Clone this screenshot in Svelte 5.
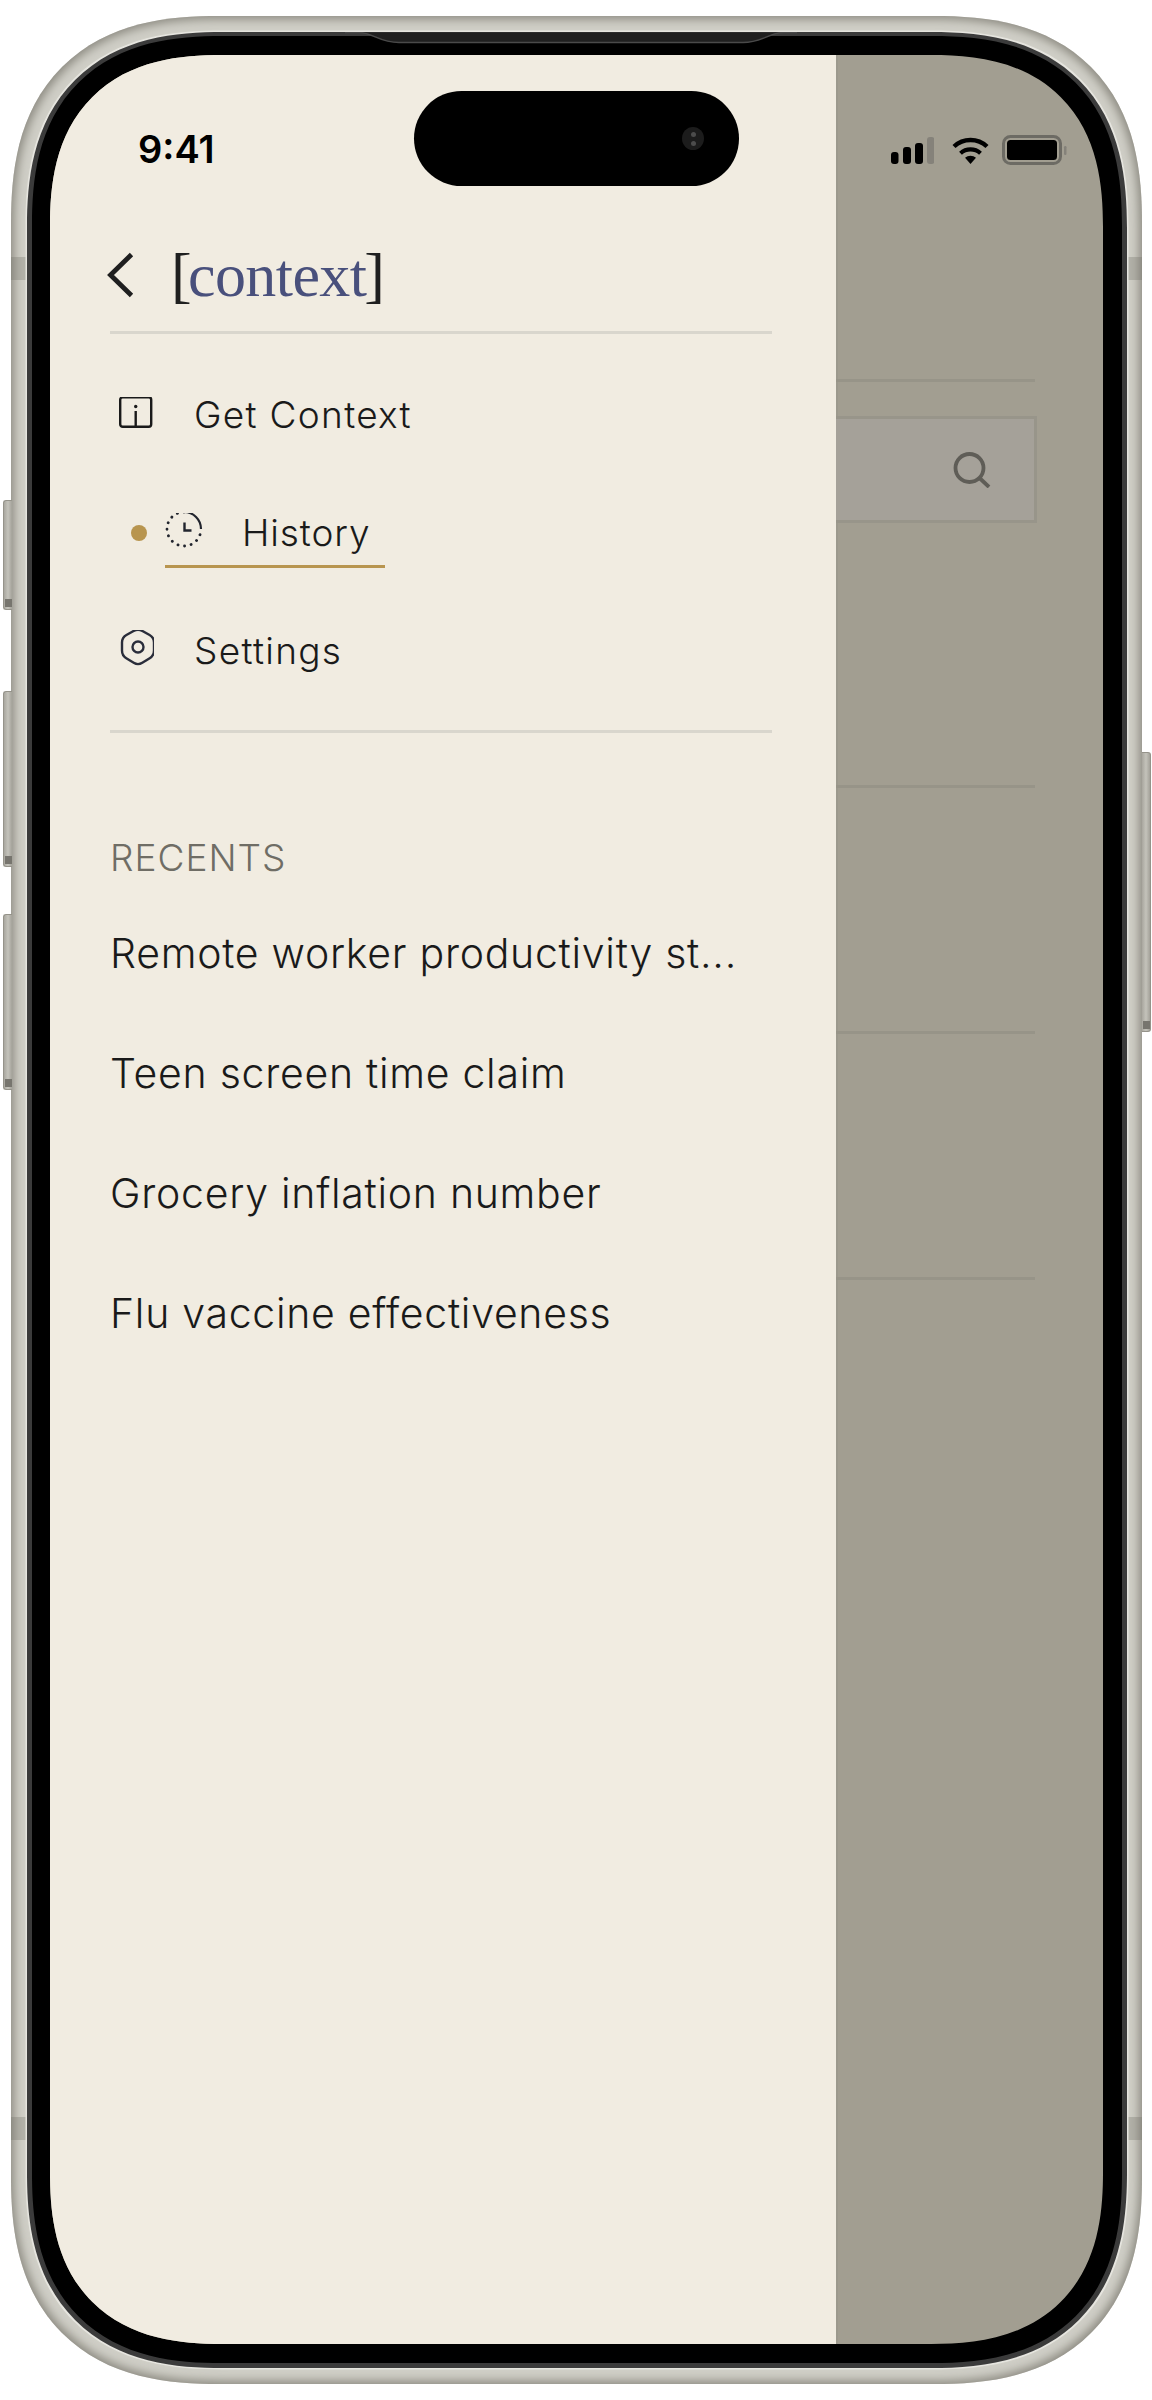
<script>
	const recents = [
		'Remote worker productivity st...',
		'Teen screen time claim',
		'Grocery inflation number',
		'Flu vaccine effectiveness'
	];
</script>

<div class="page">
	<div class="phone">
		<span class="btn left b1"></span>
		<span class="btn left b2"></span>
		<span class="btn left b3"></span>
		<span class="btn right"></span>
		<span class="band tl"></span>
		<span class="band tr"></span>
		<span class="band bl"></span>
		<span class="band br"></span>

		<div class="bezel">
			<svg class="speaker" width="452" height="12" viewBox="0 0 452 12">
				<path d="M0 .5h14c14 0 20 10 40 10h344c20 0 26-10 40-10h14" fill="#1f1f1f" stroke="#4a4a4a" stroke-width="1.5" />
			</svg>
			<div class="black">
				<div class="screen">
					<div class="statusbar">
						<span class="time">9:41</span>
						<div class="status-icons">
							<svg width="43" height="27" viewBox="0 0 43 27">
								<rect x="0" y="15" width="7.5" height="12" rx="3" fill="#000" />
								<rect x="12" y="10" width="8" height="17" rx="3" fill="#000" />
								<rect x="24" y="6" width="8" height="21" rx="3" fill="#000" />
								<rect x="36" y="0" width="7.5" height="27" rx="3" fill="#85827a" />
							</svg>
							<svg class="wifi" width="37" height="27" viewBox="0 0 37 27">
								<path d="M2 9.5a24 24 0 0 1 33 0" fill="none" stroke="#000" stroke-width="4.4" />
								<path d="M8.5 16.2a15 15 0 0 1 20 0" fill="none" stroke="#000" stroke-width="4.2" />
								<path d="M13 20.8a8.5 8.5 0 0 1 11 0L18.500 27z" fill="#000" />
							</svg>
							<svg class="battery" width="65" height="30" viewBox="0 0 65 30">
								<rect x="1.500" y="1.500" width="57" height="27" rx="7" fill="none" stroke="#6d6b64" stroke-width="3" />
								<rect x="5" y="5" width="50" height="20" rx="3.500" fill="#000" />
								<rect x="62" y="11" width="2.500" height="9" rx="1.200" fill="#85827a" />
							</svg>
						</div>
					</div>
					<div class="island"><span class="camera"><i></i><i></i></span></div>

					<aside class="panel">
						<header class="head">
							<svg class="back" width="28" height="46" viewBox="0 0 28 46">
								<path d="M24.500 2.500 3.500 23l21 20.500" fill="none" stroke="#1f1f1f" stroke-width="4.800" />
							</svg>
							<h1>[<span>context</span>]</h1>
						</header>

						<nav class="nav">
							<a class="item">
								<svg width="36" height="34" viewBox="0 2 36 34">
									<rect x="2.200" y="2.200" width="31" height="29.600" rx="2.500" fill="none" stroke="#1a1a1a" stroke-width="2.400" />
									<circle cx="17.700" cy="11.500" r="1.700" fill="#1a1a1a" />
									<path d="M17.700 16v15" stroke="#1a1a1a" stroke-width="2.400" />
								</svg>
								<span>Get Context</span>
							</a>
							<a class="item active">
								<i class="dot"></i>
								<span class="active-link">
									<svg width="38" height="38" viewBox="0 3 38 38">
										<path d="M19 2a17 17 0 1 0 17 17" fill="none" stroke="#22252e" stroke-width="2.800" stroke-dasharray="0.100 6.600" stroke-linecap="round" />
										<path d="M19 2a17 17 0 0 1 17 17" fill="none" stroke="#22252e" stroke-width="2.200" />
										<path d="M19.500 12.500v8h7" fill="none" stroke="#22252e" stroke-width="2.400" />
									</svg>
									<span class="history">History</span>
								</span>
							</a>
							<a class="item">
								<svg width="36" height="40" viewBox="-2 3 36 40">
									<path d="M13.600 4Q18 1.500 22.400 4L29.600 8Q34 10.500 34 15.500V23.500Q34 28.500 29.700 31.200L22.300 35.800Q18 38.500 13.700 35.800L6.300 31.200Q2 28.500 2 23.500V15.500Q2 10.500 6.400 8Z" fill="none" stroke="#2a2d3a" stroke-width="2.400" />
									<circle cx="18" cy="20" r="5.500" fill="none" stroke="#2a2d3a" stroke-width="2.400" />
								</svg>
								<span>Settings</span>
							</a>
						</nav>

						<h2>RECENTS</h2>
						<ul class="recents">
							{#each recents as title}
								<li>{title}</li>
							{/each}
						</ul>
					</aside>

					<div class="backdrop">
						<div class="rule"></div>
						<div class="search">
							<svg width="38" height="36" viewBox="0 0 38 36">
								<circle cx="16.500" cy="16" r="14" fill="none" stroke="#5f5d57" stroke-width="3.800" />
								<path d="M27 26.500 36 35" stroke="#5f5d57" stroke-width="3.800" />
							</svg>
						</div>
						<div class="row first"></div>
						<div class="row"></div>
						<div class="row"></div>
					</div>
				</div>
			</div>
		</div>
	</div>
</div>

<style>
	:global(body) {
		margin: 0;
		background: #fff;
	}

	.page {
		height: 2400px;
		box-sizing: border-box;
		padding: 16px 10px 16px 11px;
	}

	.phone {
		position: relative;
		height: 100%;
		box-sizing: border-box;
		padding: 16px 15px 16px 16px;
		border-radius: 208px;
		corner-shape: superellipse(1.3);
		background: #cfcec6;
		box-shadow: inset 0 0 10px 3px #8c8a81;
	}

	.btn {
		position: absolute;
		width: 9px;
		background: linear-gradient(90deg, #a9a79f, #c4c3bb 50%, #a4a29a);
		border: 1px solid #95938a;
		box-sizing: border-box;
	}

	.btn::after {
		content: '';
		position: absolute;
		left: 1px;
		right: 0;
		bottom: 2px;
		height: 8px;
		background: #77756e;
	}

	.btn.left {
		left: -8px;
		border-radius: 3px 0 0 3px;
		border-right: none;
	}

	.b1 { top: 484px; height: 110px; }
	.b2 { top: 675px; height: 176px; }
	.b3 { top: 898px; height: 176px; }

	.btn.right {
		right: -9px;
		top: 736px;
		height: 280px;
		border-radius: 0 3px 3px 0;
		border-left: none;
	}

	.band {
		position: absolute;
		width: 16px;
		height: 23px;
		background: rgba(110, 108, 100, 0.3);
	}

	.tl { left: 0; top: 241px; }
	.tr { right: 0; top: 241px; }
	.bl { left: 0; top: 2101px; }
	.br { right: 0; top: 2101px; }

	.bezel {
		position: relative;
		height: 100%;
		box-sizing: border-box;
		padding: 4px 5px 5px 5px;
		border-radius: 196px;
		corner-shape: superellipse(1.3);
		background: #3b3b3b;
		box-shadow: 0 0 0 1.5px #e6e5df;
	}

	.speaker {
		position: absolute;
		top: 0;
		left: 318px;
		z-index: 1;
	}

	.black {
		height: 100%;
		box-sizing: border-box;
		padding: 19px 19px 19px 18px;
		border-radius: 190px;
		corner-shape: superellipse(1.3);
		background: #000;
	}

	.screen {
		position: relative;
		display: flex;
		height: 100%;
		overflow: hidden;
		border-radius: 172px;
		corner-shape: superellipse(1.3);
		background: #a29e91;
		font-family: Inter, 'Liberation Sans', sans-serif;
	}

	.statusbar {
		position: absolute;
		top: 80px;
		left: 88px;
		right: 36px;
		z-index: 2;
		display: flex;
		justify-content: space-between;
		align-items: flex-start;
	}

	.time {
		font-size: 38px;
		font-weight: 600;
		line-height: 28px;
		color: #000;
	}

	.status-icons {
		display: flex;
		align-items: flex-start;
		padding-top: 2px;
	}

	.wifi { margin-left: 18px; }
	.battery { margin-left: 13px; margin-top: -2px; }

	.island {
		position: absolute;
		top: 36px;
		left: 364px;
		z-index: 2;
		display: flex;
		align-items: center;
		justify-content: flex-end;
		box-sizing: border-box;
		width: 325px;
		height: 95px;
		padding-right: 35px;
		border-radius: 48px;
		background: #000;
	}

	.camera {
		display: flex;
		flex-direction: column;
		align-items: center;
		justify-content: center;
		gap: 4px;
		width: 22px;
		height: 23px;
		border-radius: 50%;
		background: #1c1c1c;
	}

	.camera i {
		width: 5px;
		height: 5px;
		border-radius: 50%;
		background: #4c4c4c;
	}

	.panel {
		flex: none;
		width: 786px;
		box-sizing: border-box;
		padding: 190px 64px 0 60px;
		background: #f1ece1;
		box-shadow: 2px 0 0 #9c998d;
		color: #1f1f1f;
	}

	.head {
		display: flex;
		align-items: center;
		gap: 36px;
		height: 60px;
		padding-bottom: 26px;
		border-bottom: 3px solid #d9d6cd;
	}

	.back {
		margin-left: -3px;
	}

	h1 {
		margin: 0;
		font-family: 'Liberation Serif', serif;
		font-size: 62px;
		font-weight: 400;
		letter-spacing: -0.6px;
		line-height: 60px;
		color: #1f1f1f;
	}

	h1 span {
		margin: 0 -2px 0 -3px;
		color: #49507c;
	}

	.nav {
		display: flex;
		flex-direction: column;
		padding: 21px 0;
		border-bottom: 3px solid #d9d6cd;
	}

	.item {
		display: flex;
		align-items: center;
		gap: 40px;
		height: 118px;
		padding-left: 8px;
		font-size: 37px;
		font-weight: 300;
		letter-spacing: 1.3px;
		color: #1a1a1a;
	}

	.item.active {
		gap: 18px;
		padding-left: 21px;
	}

	.dot {
		width: 16px;
		height: 16px;
		margin-top: 2px;
		border-radius: 50%;
		background: #b8954f;
	}

	.active-link {
		display: flex;
		align-items: center;
		gap: 39px;
		padding: 13px 14px 10px 0;
		border-bottom: 3px solid #b8954f;
	}

	.history {
		letter-spacing: 0.9px;
	}

	h2 {
		margin: 103px 0 13px;
		font-size: 37px;
		font-weight: 300;
		letter-spacing: 1px;
		line-height: 44px;
		color: #6f6d65;
	}

	.recents {
		margin: 0;
		padding: 0;
		list-style: none;
		font-size: 41px;
		font-weight: 300;
		letter-spacing: 0.72px;
		line-height: 120px;
		color: #1a1a1a;
	}

	.backdrop {
		flex: 1;
		box-sizing: border-box;
		padding: 324px 68px 0 0;
	}

	.rule {
		border-top: 3px solid #979488;
	}

	.search {
		display: flex;
		align-items: center;
		justify-content: flex-end;
		box-sizing: border-box;
		height: 107px;
		margin: 34px -2px 0 0;
		padding-right: 43px;
		background: #a5a199;
		border: 3px solid #98958a;
		border-left: none;
	}

	.row {
		height: 246px;
		box-sizing: border-box;
		border-bottom: 3px solid #979488;
	}

	.row.first {
		height: 265px;
	}
</style>
